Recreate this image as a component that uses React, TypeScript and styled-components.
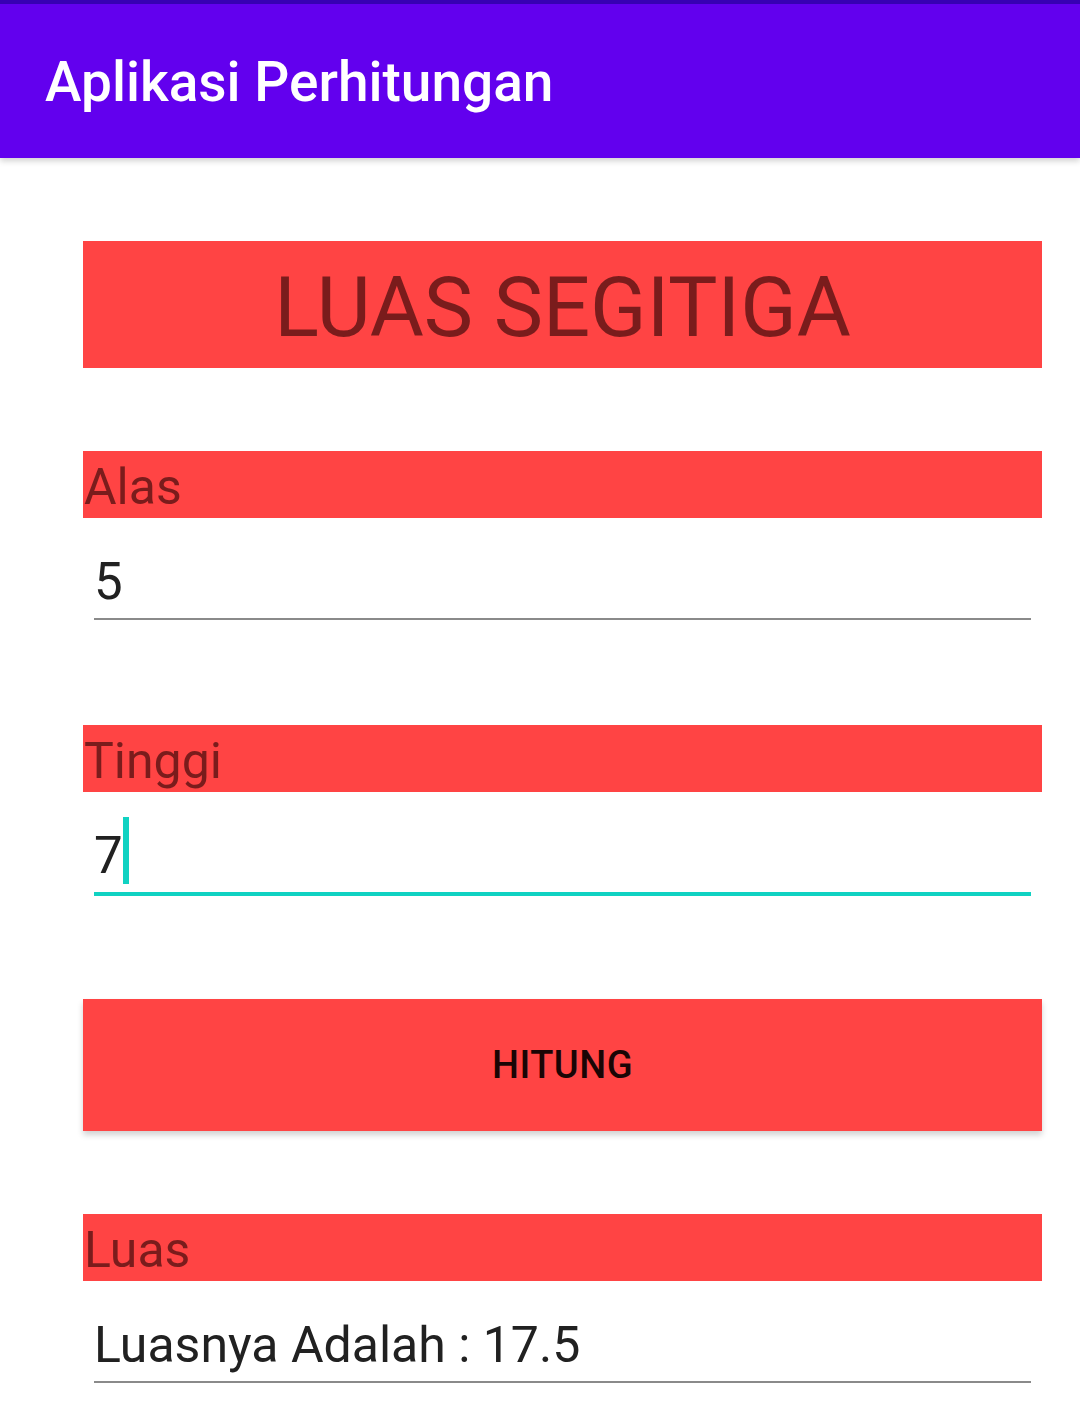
import React from 'react';
import styled, { createGlobalStyle } from 'styled-components';

const GlobalStyle = createGlobalStyle`
  html, body {
    margin: 0;
    padding: 0;
    background: #ffffff;
    font-family: Roboto, 'Noto Sans', sans-serif;
  }
`;

const Screen = styled.div`
  width: 1080px;
  min-height: 1406px;
  background: #ffffff;
  overflow: hidden;
`;

const AppBar = styled.header`
  height: 154px;
  border-top: 4px solid #3700b3;
  background: #6200ee;
  display: flex;
  align-items: center;
  padding-left: 45px;
  box-shadow: 0 3px 6px rgba(0, 0, 0, 0.18);
  position: relative;
  z-index: 1;
`;

const AppTitle = styled.h1`
  margin: 0;
  color: #ffffff;
  font-size: 55px;
  font-weight: 500;
  line-height: 1;
  margin-top: 2px;
`;

const Content = styled.main`
  display: flex;
  flex-direction: column;
  padding: 83px 38px 0 83px;
`;

const Heading = styled.div`
  height: 127px;
  background: #ff4444;
  display: flex;
  align-items: center;
  justify-content: center;
  color: #7a1c1c;
  font-size: 83px;
  font-weight: 400;
  padding-top: 6px;
  box-sizing: border-box;
  margin-bottom: 83px;
`;

const Label = styled.div`
  height: 67px;
  background: #ff4444;
  color: #7a1c1c;
  font-size: 50px;
  line-height: 73px;
  padding-left: 1px;
  overflow: hidden;
`;

const Field = styled.div<{ $focused?: boolean; $gap: number; $size: number }>`
  height: ${(p) => (p.$focused ? 104 : 102)}px;
  margin: 0 11px 0 11px;
  border-bottom: ${(p) => (p.$focused ? '4px solid #10d2c2' : '2px solid #8a8a8a')};
  margin-bottom: ${(p) => (p.$focused ? p.$gap - 2 : p.$gap)}px;
  display: flex;
  align-items: flex-end;
  padding-bottom: ${(p) => (p.$focused ? 11 : 11)}px;
  box-sizing: border-box;
  color: #212121;
  font-size: ${(p) => p.$size}px;
  line-height: 1;
`;

const Value = styled.span`
  display: inline-block;
  padding-left: 0;
`;

const Cursor = styled.span`
  display: inline-block;
  width: 6px;
  height: 67px;
  background: #10d2c2;
  margin-left: 0;
  margin-bottom: -3px;
`;

const ActionButton = styled.button`
  height: 132px;
  border: none;
  background: #ff4444;
  color: #1a0505;
  font-family: Roboto, 'Noto Sans', sans-serif;
  font-size: 38px;
  font-weight: 500;
  letter-spacing: 0.5px;
  box-shadow: 0 4px 6px rgba(0, 0, 0, 0.18);
  margin-bottom: 83px;
  cursor: pointer;
`;

export default function App() {
  return (
    <Screen>
      <GlobalStyle />
      <AppBar>
        <AppTitle>Aplikasi Perhitungan</AppTitle>
      </AppBar>
      <Content>
        <Heading>LUAS SEGITIGA</Heading>

        <Label>Alas</Label>
        <Field $gap={105} $size={51}>
          <Value>5</Value>
        </Field>

        <Label>Tinggi</Label>
        <Field $focused $gap={105} $size={51}>
          <Value>7</Value>
          <Cursor />
        </Field>

        <ActionButton>HITUNG</ActionButton>

        <Label>Luas</Label>
        <Field $gap={20} $size={50}>
          <Value>Luasnya Adalah : 17.5</Value>
        </Field>
      </Content>
    </Screen>
  );
}
